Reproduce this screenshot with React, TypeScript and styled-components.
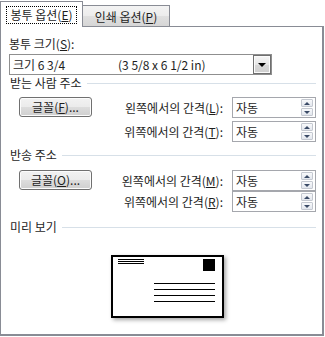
import React from "react";
import styled, { createGlobalStyle } from "styled-components";

const Global = createGlobalStyle`
  html, body { margin: 0; padding: 0; background: #ffffff; }
  body {
    font-family: "Noto Sans CJK KR", "Noto Sans", sans-serif;
    font-size: 12px;
    color: #1e1e1e;
  }
  * { box-sizing: border-box; }
`;

const Window = styled.div`
  width: 325px;
  height: 337px;
  display: flex;
  flex-direction: column;
  background: #ffffff;
`;

const TabStrip = styled.div`
  display: flex;
  align-items: flex-end;
  height: 27px;
  position: relative;
  z-index: 1;
`;

const Tab = styled.div<{ $active?: boolean }>`
  display: flex;
  align-items: center;
  justify-content: center;
  height: ${(p) => (p.$active ? 26 : 21)}px;
  width: ${(p) => (p.$active ? 83 : 88)}px;
  margin-left: ${(p) => (p.$active ? 0 : -1)}px;
  margin-bottom: ${(p) => (p.$active ? 0 : 1)}px;
  border: 1px solid #898c95;
  border-bottom: none;
  background: ${(p) =>
    p.$active ? "#ffffff" : "linear-gradient(#f3f3f3, #ececec 50%, #e0e0e0 50%, #d6d6d6)"};
  line-height: 16px;
  white-space: nowrap;
  padding-top: ${(p) => (p.$active ? 1 : 1)}px;
`;

const Focus = styled.span`
  outline: 1px dotted #000000;
  outline-offset: 0;
  padding: 0 3px;
`;

const U = styled.span`
  text-decoration: underline;
  text-underline-offset: 1px;
`;

const Panel = styled.div`
  width: 324px;
  height: 310px;
  margin-top: -1px;
  border: 1px solid #898c95;
  border-right-width: 2px;
  border-bottom-width: 2px;
  padding: 9px 6px 0 8px;
  display: flex;
  flex-direction: column;
`;

const Label = styled.div`
  line-height: 16px;
  white-space: nowrap;
`;

const Combo = styled.div`
  margin-top: 2px;
  width: 263px;
  height: 21px;
  border: 1px solid #8f8f8f;
  display: flex;
  align-items: center;
  line-height: 16px;
  white-space: nowrap;
`;

const ComboSize = styled.span`
  width: 108px;
  padding-left: 3px;
`;

const ComboDims = styled.span`
  flex: 1;
`;

const DropButton = styled.div`
  width: 18px;
  height: 19px;
  border: 1px solid #6f6f6f;
  background: linear-gradient(#f6f6f6, #e6e6e6 50%, #d8d8d8 50%, #cfcfcf);
  display: flex;
  align-items: center;
  justify-content: center;
  box-shadow: inset 0 0 0 1px #fbfbfb;
`;

const Arrow = styled.div`
  width: 0;
  height: 0;
  border-left: 4px solid transparent;
  border-right: 4px solid transparent;
  border-top: 4px solid #000000;
`;

const Heading = styled.div<{ $top: number }>`
  margin-top: ${(p) => p.$top}px;
  display: flex;
  align-items: center;
  gap: 5px;
  line-height: 16px;
  padding-left: 1px;
  white-space: nowrap;
`;

const Rule = styled.div`
  flex: 1;
  height: 1px;
  background: #d7e0e8;
`;

const SectionBody = styled.div<{ $top: number }>`
  margin-top: ${(p) => p.$top}px;
  display: flex;
  align-items: flex-start;
`;

const PushButton = styled.div`
  margin-left: 10px;
  width: 73px;
  height: 20px;
  border: 1px solid #707070;
  border-radius: 3px;
  background: linear-gradient(#f2f2f2, #ebebeb 50%, #dddddd 50%, #cfcfcf);
  box-shadow: inset 0 0 0 1px #fcfcfc;
  display: flex;
  align-items: center;
  justify-content: center;
  line-height: 16px;
  white-space: nowrap;
`;

const FieldGrid = styled.div<{ $gap: number }>`
  margin-left: auto;
  display: grid;
  grid-template-columns: auto 84px;
  column-gap: 9px;
  row-gap: ${(p) => p.$gap}px;
  align-items: center;
`;

const FieldLabel = styled.div`
  justify-self: end;
  line-height: 16px;
  white-space: nowrap;
`;

const SpinBox = styled.div`
  height: 21px;
  border: 1px solid #a5a7ad;
  display: flex;
  align-items: center;
  padding: 0 2px 0 3px;
  line-height: 16px;
`;

const SpinValue = styled.span`
  flex: 1;
`;

const SpinButtons = styled.div`
  display: flex;
  flex-direction: column;
  gap: 1px;
`;

const SpinButton = styled.div`
  width: 12px;
  height: 8px;
  border: 1px solid #c4c8d0;
  border-radius: 1px;
  background: linear-gradient(#f8f9fb, #e3e7ee);
  display: flex;
  align-items: center;
  justify-content: center;
`;

const SpinArrow = styled.div<{ $up?: boolean }>`
  width: 0;
  height: 0;
  border-left: 3px solid transparent;
  border-right: 3px solid transparent;
  ${(p) => (p.$up ? "border-bottom: 3px solid #3a4a66;" : "border-top: 3px solid #3a4a66;")}
`;

const Preview = styled.div`
  margin-top: 20px;
  margin-left: 102px;
  width: 113px;
  height: 63px;
  box-shadow: 2px 2px 4px rgba(0, 0, 0, 0.35);
  display: flex;
`;

function Spin() {
  return (
    <SpinBox>
      <SpinValue>자동</SpinValue>
      <SpinButtons>
        <SpinButton>
          <SpinArrow $up />
        </SpinButton>
        <SpinButton>
          <SpinArrow />
        </SpinButton>
      </SpinButtons>
    </SpinBox>
  );
}

function Envelope() {
  return (
    <svg width="113" height="63" viewBox="0 0 113 63">
      <rect x="1" y="1" width="111" height="61" fill="#ffffff" stroke="#000000" strokeWidth="2" />
      <line x1="7" y1="4.5" x2="33" y2="4.5" stroke="#000" strokeWidth="1" />
      <line x1="7" y1="6.5" x2="33" y2="6.5" stroke="#000" strokeWidth="1" />
      <line x1="7" y1="8.5" x2="33" y2="8.5" stroke="#000" strokeWidth="1" />
      <rect x="92" y="4" width="12" height="12" fill="#000000" />
      <line x1="43" y1="28.5" x2="104" y2="28.5" stroke="#000" strokeWidth="1.2" />
      <line x1="43" y1="34.5" x2="104" y2="34.5" stroke="#000" strokeWidth="1.2" />
      <line x1="43" y1="40.5" x2="104" y2="40.5" stroke="#000" strokeWidth="1.2" />
      <line x1="43" y1="46.5" x2="104" y2="46.5" stroke="#000" strokeWidth="1.2" />
    </svg>
  );
}

export default function App() {
  return (
    <Window>
      <Global />
      <TabStrip>
        <Tab $active>
          <Focus>
            봉투 옵션(<U>E</U>)
          </Focus>
        </Tab>
        <Tab>
          인쇄 옵션(<U>P</U>)
        </Tab>
      </TabStrip>
      <Panel>
        <Label>
          봉투 크기(<U>S</U>):
        </Label>
        <Combo>
          <ComboSize>크기 6 3/4</ComboSize>
          <ComboDims>(3 5/8 x 6 1/2 in)</ComboDims>
          <DropButton>
            <Arrow />
          </DropButton>
        </Combo>

        <Heading $top={0}>
          받는 사람 주소
          <Rule />
        </Heading>
        <SectionBody $top={6}>
          <PushButton>
            글꼴(<U>F</U>)...
          </PushButton>
          <FieldGrid $gap={3}>
            <FieldLabel>
              왼쪽에서의 간격(<U>L</U>):
            </FieldLabel>
            <Spin />
            <FieldLabel>
              위쪽에서의 간격(<U>T</U>):
            </FieldLabel>
            <Spin />
          </FieldGrid>
        </SectionBody>

        <Heading $top={5}>
          반송 주소
          <Rule />
        </Heading>
        <SectionBody $top={7}>
          <PushButton>
            글꼴(<U>O</U>)...
          </PushButton>
          <FieldGrid $gap={0}>
            <FieldLabel>
              왼쪽에서의 간격(<U>M</U>):
            </FieldLabel>
            <Spin />
            <FieldLabel>
              위쪽에서의 간격(<U>R</U>):
            </FieldLabel>
            <Spin />
          </FieldGrid>
        </SectionBody>

        <Heading $top={7}>
          미리 보기
          <Rule />
        </Heading>
        <Preview>
          <Envelope />
        </Preview>
      </Panel>
    </Window>
  );
}
